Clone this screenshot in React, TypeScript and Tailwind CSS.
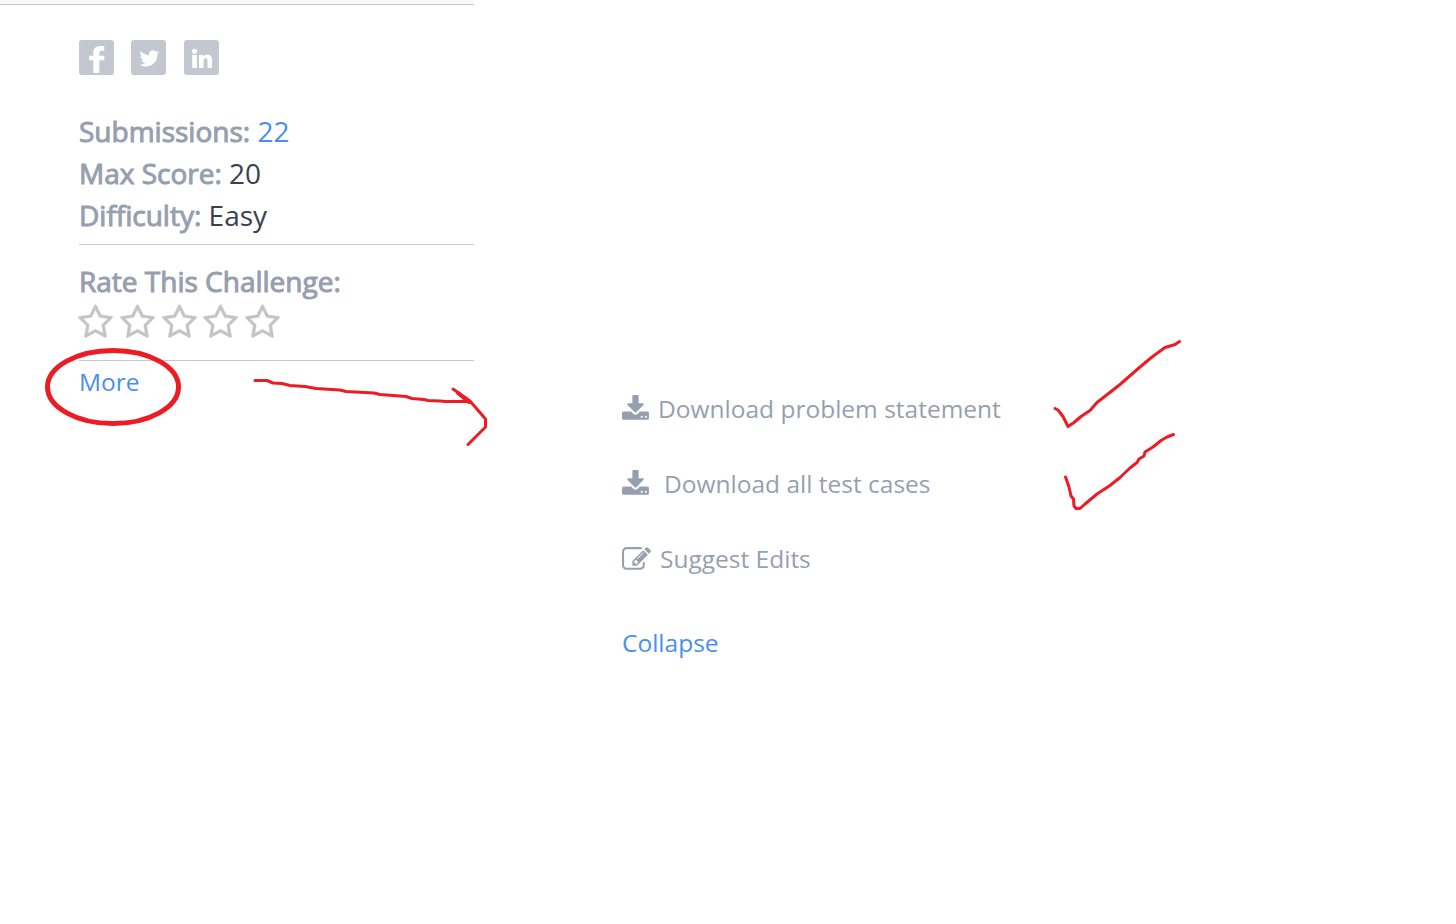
import React from "react";

const STAR =
  "M1201 1004l306-297-422-62-189-382-189 382-422 62 306 297-73 421 378-199 377 199zm527-357q0 22-26 48l-363 354 86 500q1 7 1 20 0 50-41 50-19 0-40-12l-449-236-449 236q-22 12-40 12-21 0-31.5-14.5t-10.5-35.5q0-6 2-20l86-500-364-354q-25-27-25-48 0-37 56-46l502-73 225-455q19-41 49-41t49 41l225 455 502 73q56 9 56 46z";
const DOWNLOAD =
  "M1344 1344q0-26-19-45t-45-19-45 19-19 45 19 45 45 19 45-19 19-45zm256 0q0-26-19-45t-45-19-45 19-19 45 19 45 45 19 45-19 19-45zm128-224v320q0 40-28 68t-68 28h-1472q-40 0-68-28t-28-68v-320q0-40 28-68t68-28h465l135 136q58 56 136 56t136-56l136-136h464q40 0 68 28t28 68zm-325-569q17 41-14 70l-448 448q-18 19-45 19t-45-19l-448-448q-31-29-14-70 17-39 59-39h256v-448q0-26 19-45t45-19h256q26 0 45 19t19 45v448h256q42 0 59 39z";
const EDIT =
  "M888 1184l116-116-152-152-116 116v56h96v96h56zm440-720q-16-16-33 1l-350 350q-17 17-1 33t33-1l350-350q17-17 1-33zm80 594v190q0 119-84.5 203.5t-203.5 84.5h-832q-119 0-203.5-84.5t-84.5-203.5v-832q0-119 84.5-203.5t203.5-84.5h832q63 0 117 25 15 7 18 23 3 17-9 29l-49 49q-14 14-32 8-23-6-45-6h-832q-66 0-113 47t-47 113v832q0 66 47 113t113 47h832q66 0 113-47t47-113v-126q0-13 9-22l64-64q15-15 35-7t20 29zm-96-738l288 288-672 672h-288v-288zm444 132l-92 92-288-288 92-92q28-28 68-28t68 28l152 152q28 28 28 68t-28 68z";

function Icon({ d, className }: { d: string; className: string }) {
  return (
    <svg viewBox="0 0 1792 1792" fill="currentColor" className={className}>
      <path d={d} />
    </svg>
  );
}

function SocialButton({ children }: { children: React.ReactNode }) {
  return (
    <a className="block size-[35px] rounded-[3px] bg-[#c2c7d0] text-white">
      <svg viewBox="0 0 35 35" fill="currentColor" className="size-[35px]">
        {children}
      </svg>
    </a>
  );
}

function Label({ children }: { children: React.ReactNode }) {
  return <span className="text-[#979faf] [-webkit-text-stroke:1px_#979faf]">{children}</span>;
}

function Annotations() {
  return (
    <svg
      viewBox="0 0 1456 924"
      className="pointer-events-none absolute left-0 top-0 h-[924px] w-[1456px]"
      fill="none"
      stroke="#ed1c24"
      strokeWidth="3"
      strokeLinecap="round"
      strokeLinejoin="round"
    >
      <ellipse cx="113" cy="387" rx="65.5" ry="36.5" strokeWidth="5" />
      <path d="M255 380.5H267L273 383L282 383.5L290 385.5L305 386.5L316 388.5L340 390L346 391.5L374 393L380 394.5L406 396.5L412 398.5L424 399.500L428 400.500L440 401L445 401.500H470" />
      <path d="M453 389L470 401L485.500 419V427L468 444.500" />
      <path d="M458 393L469 402" strokeWidth="4" />
      <path d="M1055 408.500L1058 410L1063 416.500L1068 426.500L1074 422.500L1081 416.500L1090 410.500L1097 402.500L1120 384.500L1140 367L1152 357L1165 347.500L1175 344.500L1179.500 341.500" />
      <path d="M1065.500 477L1069 487L1071 496L1073.500 499L1074 506L1076 508.500H1080L1085 504L1097 494L1110 485.500L1120 477.500L1130 468L1137 462.500L1139 459L1144 456L1145 452L1153 447L1161 440.500L1167 437L1173.500 434.500" />
    </svg>
  );
}

export default function App() {
  return (
    <main className="relative flex h-[924px] w-[1456px] overflow-hidden bg-white font-['Open_Sans',sans-serif]">
      <aside className="w-[474px] shrink-0">
        <div className="h-[5px] border-b border-[#c2c7d0] bg-[#f8f9fa]" />
        <div className="pl-[79px] pt-[35px]">
          <div className="flex">
            <SocialButton>
              <path d="M14.300 33V20.300H10V15.700H14.300V12.500C14.300 8.200 17 6 21 6H25.300V10.800H22.800C20.800 10.800 20.300 11.800 20.300 13.500V15.700H25.300V20.300H20.300V33Z" />
            </SocialButton>
            <div className="ml-[17px]">
              <SocialButton>
                <path transform="translate(7.200 7.600) scale(.9)" d="M23.400 5.200c-.8.360-1.700.6-2.600.7.900-.560 1.600-1.440 2-2.500-.9.520-1.800.9-2.900 1.100a4.500 4.500 0 0 0-7.700 4.100A12.900 12.900 0 0 1 2.900 3.900a4.500 4.500 0 0 0 1.400 6c-.7 0-1.430-.2-2-.57v.06c0 2.200 1.570 4 3.640 4.460-.68.180-1.400.2-2.050.08.580 1.800 2.260 3.100 4.240 3.150A9.100 9.100 0 0 1 1.400 19c2 1.280 4.400 2 7 2 8.300 0 12.900-6.900 12.900-12.900v-.6c.9-.63 1.600-1.420 2.100-2.300z" />
              </SocialButton>
            </div>
            <div className="ml-[18px]">
              <SocialButton>
                <circle cx="10.500" cy="11.300" r="2.600" />
                <path d="M8.200 15H12.900V28H8.200ZM15 15H19.300V16.600C20.300 15.100 21.600 14.500 23.200 14.500C26.900 14.500 28.100 17 28.100 20.500V28H23.500V21.300C23.500 19.500 23.100 18.300 21.600 18.300C20 18.300 19.500 19.600 19.500 21.300V28H15Z" />
              </SocialButton>
            </div>
          </div>
          <div className="mt-[35px] h-[135px] border-b border-[#c2c7d0] text-[28px] leading-[42px] text-[#39424e]">
            <p><Label>Submissions:</Label> <a className="text-[#4b8ef1]">22</a></p>
            <p><Label>Max Score:</Label> <span>20</span></p>
            <p><Label>Difficulty:</Label> <span>Easy</span></p>
          </div>
          <div className="h-[116px] border-b border-[#c2c7d0] pt-[15px] text-[28px] leading-[42px]">
            <p><Label>Rate This Challenge:</Label></p>
            <div className="-ml-[1.700px] mt-[1.600px] flex gap-[4.600px] text-[#c4c4c4]">
              {[1, 2, 3, 4, 5].map((n) => (
                <Icon key={n} d={STAR} className="size-[37px] stroke-current stroke-[28px]" />
              ))}
            </div>
          </div>
          <a className="block text-[24.500px] leading-[42px] text-[#4b8ef1]">More</a>
        </div>
      </aside>
      <section className="ml-[148px] pt-[388px] text-[24.500px] leading-[42px] text-[#979faf]">
        <div className="flex h-[75px] items-start">
          <Icon d={DOWNLOAD} className="-ml-px mr-2 mt-[7px] size-[29px]" />
          <span>Download problem statement</span>
        </div>
        <div className="flex h-[75px] items-start">
          <Icon d={DOWNLOAD} className="-ml-px mr-3.5 mt-[7px] size-[29px]" />
          <span>Download all test cases</span>
        </div>
        <div className="flex h-[84px] items-start">
          <Icon d={EDIT} className="mr-[9px] mt-[7px] size-[29px]" />
          <span>Suggest Edits</span>
        </div>
        <a className="block text-[#4b8ef1]">Collapse</a>
      </section>
      <Annotations />
    </main>
  );
}
